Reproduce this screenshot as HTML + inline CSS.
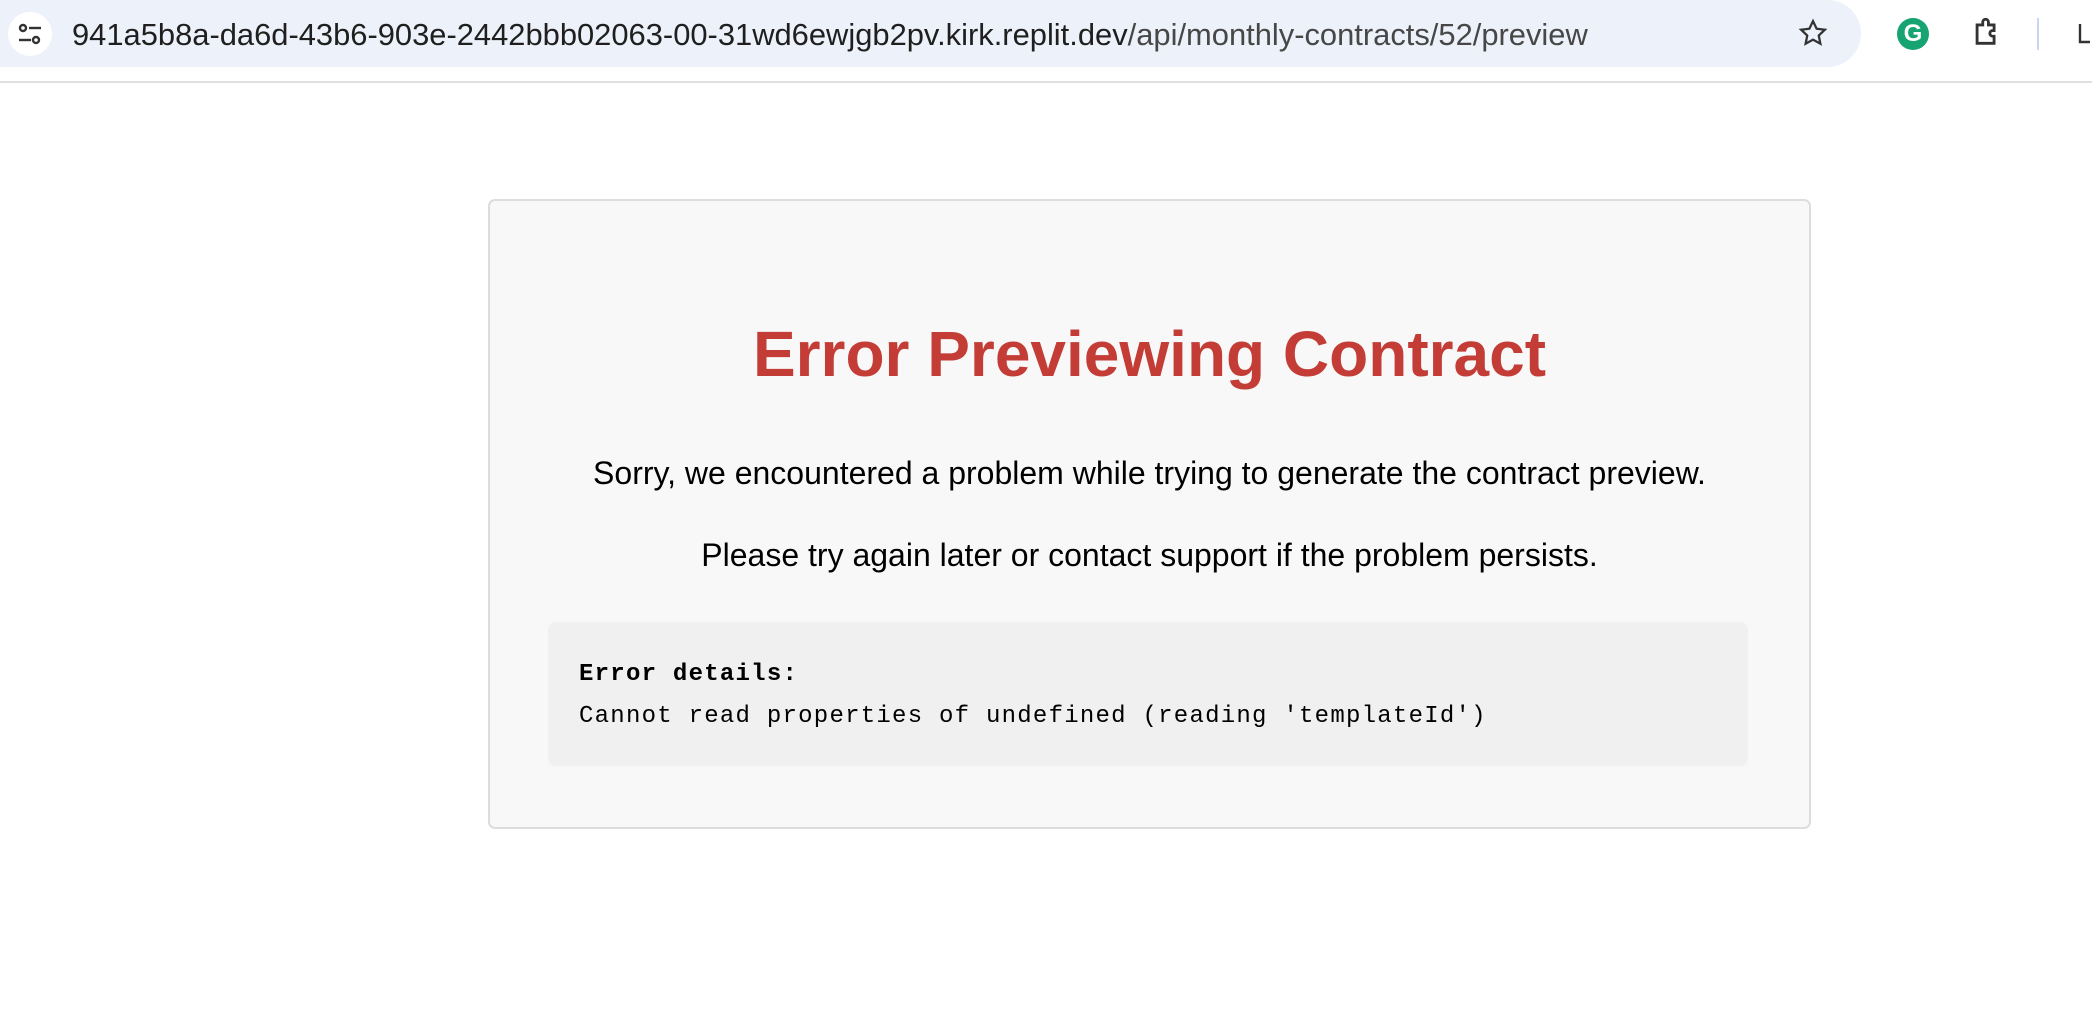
<!DOCTYPE html>
<html><head><style>
body{margin:0;width:2092px;height:1034px;background:#fff;position:relative;overflow:hidden;font-family:"Liberation Sans",Arial,sans-serif}
.bar{position:absolute;left:0;top:0;width:2092px;height:81px;border-bottom:2px solid #e0e0e0;background:#fff}
.pill{position:absolute;left:0;top:0;width:1861px;height:67px;background:#edf2fa;border-radius:0 34px 34px 0}
.url{position:absolute;left:72px;top:17px;font-size:30.9px;color:#1f1f1f;white-space:nowrap}
.url span{color:#474747}
.card{position:absolute;left:488px;top:199px;width:1319px;height:626px;background:#f8f8f8;border:2px solid #ddd;border-radius:7px}
h1{position:absolute;left:488px;width:1323px;top:317px;margin:0;text-align:center;color:#c33c35;font-size:64px;font-weight:bold}
p{position:absolute;left:488px;width:1323px;margin:0;text-align:center;font-size:32px;color:#000}
.det{position:absolute;left:548px;top:622px;width:1200px;height:144px;background:#f0f0f0;border-radius:8px}
.mono{position:absolute;left:579px;font-family:"Liberation Mono","DejaVu Sans Mono",monospace;font-size:24px;letter-spacing:1.25px;color:#000;white-space:nowrap}
</style></head><body>
<div class="bar"><div class="pill"></div>
<div style="position:absolute;left:8px;top:12px;width:44px;height:44px;border-radius:50%;background:#fff"></div>
<svg style="position:absolute;left:17px;top:21px" width="26" height="26" viewBox="0 0 26 26" fill="none" stroke="#333" stroke-width="2.4"><circle cx="6" cy="7" r="3"/><line x1="12" y1="7" x2="24" y2="7"/><circle cx="19" cy="19" r="3"/><line x1="2" y1="19" x2="14" y2="19"/></svg>
<div class="url">941a5b8a-da6d-43b6-903e-2442bbb02063-00-31wd6ewjgb2pv.kirk.replit.dev<span>/api/monthly-contracts/52/preview</span></div>
<svg style="position:absolute;left:1798px;top:18px" width="30" height="30" viewBox="0 0 24 24" fill="none" stroke="#333" stroke-width="1.8"><path d="M12 2.5l2.9 6.1 6.6.8-4.9 4.6 1.3 6.6L12 17.3l-5.9 3.3 1.3-6.6-4.9-4.6 6.6-.8z"/></svg>
<div style="position:absolute;left:1897px;top:18px;width:32px;height:32px;border-radius:50%;background:#15a472;color:#fff;font-weight:bold;font-size:24px;text-align:center;line-height:32px">G</div>
<svg style="position:absolute;left:1970px;top:15px" width="34" height="34" viewBox="0 0 24 24" fill="none" stroke="#333" stroke-width="2"><path d="M5 7h4V5a2 2 0 0 1 4 0v2h4v4h-1a2 2 0 0 0 0 4h1v5H5z"/></svg>
<div style="position:absolute;left:2037px;top:18px;width:2px;height:32px;background:#c8d6ee"></div>
<svg style="position:absolute;left:2072px;top:18px" width="20" height="32" viewBox="0 0 20 32" fill="none" stroke="#333" stroke-width="2.4"><path d="M8 6v18h10"/></svg>
</div>
<div class="card"></div>
<h1>Error Previewing Contract</h1>
<p style="top:455px">Sorry, we encountered a problem while trying to generate the contract preview.</p>
<p style="top:537px">Please try again later or contact support if the problem persists.</p>
<div class="det"></div>
<div class="mono" style="top:661px;font-weight:bold">Error details:</div>
<div class="mono" style="top:703px">Cannot read properties of undefined (reading 'templateId')</div>
</body></html>
